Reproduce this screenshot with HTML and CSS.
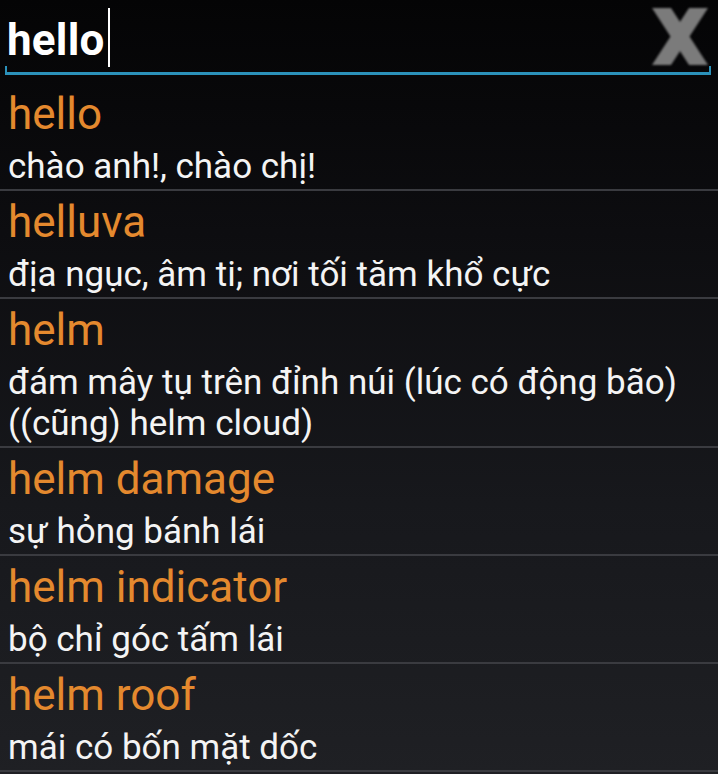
FILE: index.html
```html
<!DOCTYPE html>
<html lang="vi">
<head>
  <meta charset="UTF-8">
  <title>Từ điển Anh - Việt</title>
  <link rel="stylesheet" href="styles.css">
</head>
<body>
  <div class="search">
    <div class="field">
      <div class="query">hello<span class="caret"></span></div>
      <div class="clear">
        <svg width="56" height="57" viewBox="0 0 56 57">
          <polygon points="0,0 19,0 56,57 37,57"/>
          <polygon points="37,0 56,0 19,57 0,57"/>
        </svg>
      </div>
    </div>
    <div class="underline"></div>
  </div>

  <div class="list">
    <div class="row"><div class="word">hello</div><div class="meaning">chào anh!, chào chị!</div></div>
    <div class="row"><div class="word">helluva</div><div class="meaning">địa ngục, âm ti; nơi tối tăm khổ cực</div></div>
    <div class="row"><div class="word">helm</div><div class="meaning">đám mây tụ trên đỉnh núi (lúc có động bão) ((cũng) helm cloud)</div></div>
    <div class="row"><div class="word">helm damage</div><div class="meaning">sự hỏng bánh lái</div></div>
    <div class="row"><div class="word">helm indicator</div><div class="meaning">bộ chỉ góc tấm lái</div></div>
    <div class="row"><div class="word">helm roof</div><div class="meaning">mái có bốn mặt dốc</div></div>
  </div>
</body>
</html>
```

FILE: styles.css
```css
html, body {
  margin: 0;
  height: 774px;
  overflow: hidden;
}
body {
  background: linear-gradient(to bottom, #040405 0%, #0d0d10 30%, #17181c 65%, #1f2024 100%);
  color: #f4f4f4;
  font-family: Roboto, 'Noto Sans', sans-serif;
}
.search {
  padding-bottom: 8px;
}
.field {
  display: flex;
  align-items: flex-start;
  height: 66px;
}
.query {
  display: flex;
  margin-top: 14px;
  padding-left: 7px;
  font-size: 44px;
  font-weight: bold;
  line-height: 52px;
  letter-spacing: 0.2px;
  color: #fff;
}
.caret {
  width: 2px;
  height: 59px;
  margin-top: -6px;
  margin-left: 3px;
  background: #fff;
}
.clear {
  margin-left: auto;
  margin-top: 8px;
  margin-right: 10px;
}
.clear svg {
  display: block;
  fill: #7b7b7b;
  filter: blur(0.8px);
}
.underline {
  height: 6px;
  margin: 0 7px 0 5px;
  border: 2px solid #2b91ba;
  border-top: none;
  border-bottom-width: 3px;
}
.row {
  padding: 5px 8px 2px;
  border-bottom: 2px solid #3a3b40;
}
.word {
  font-size: 44px;
  line-height: 52px;
  color: #e4892e;
}
.meaning {
  margin-top: 6px;
  font-size: 35px;
  line-height: 41px;
  color: #f4f4f4;
}
```
